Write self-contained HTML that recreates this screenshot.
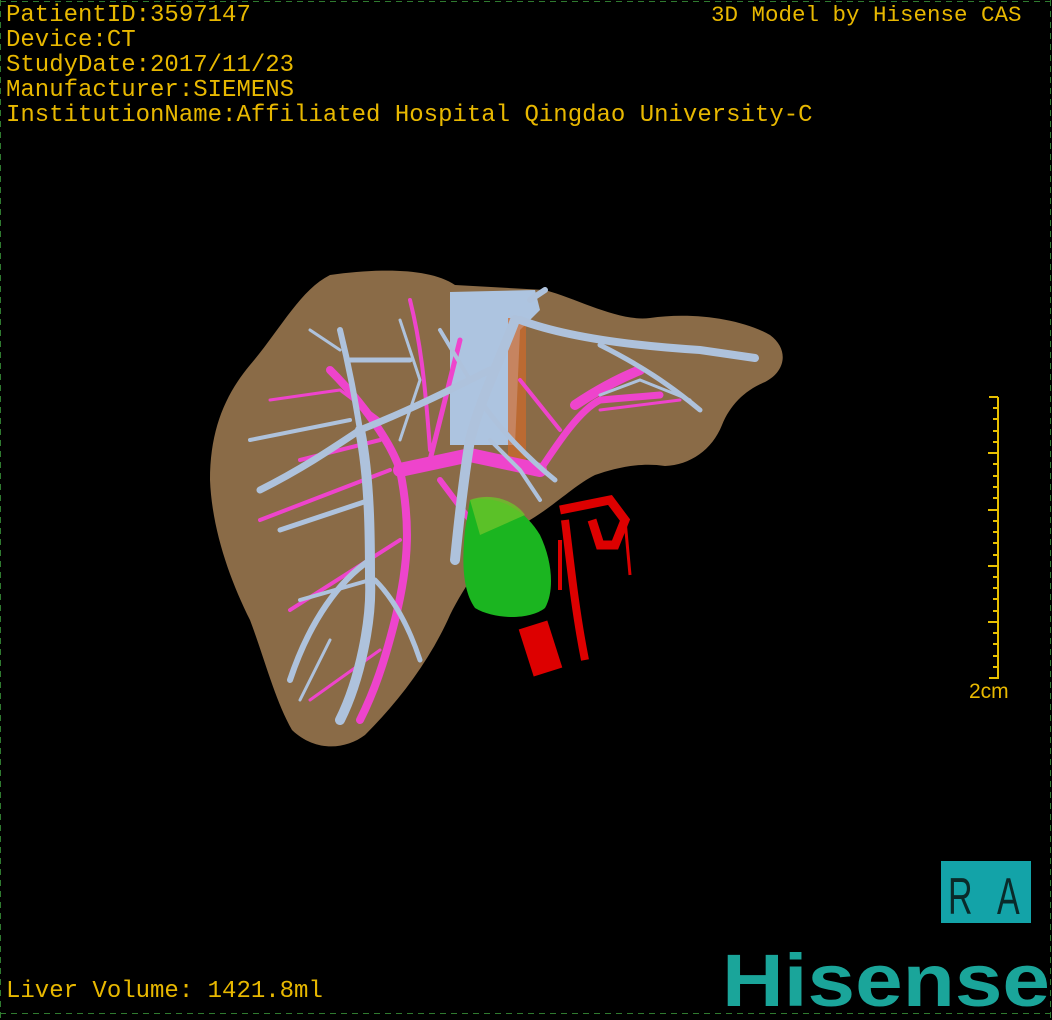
<!DOCTYPE html>
<html><head><meta charset="utf-8"><style>
html,body{margin:0;padding:0;background:#000;}
#c{position:relative;width:1052px;height:1020px;overflow:hidden;background:#000;}
.t{position:absolute;left:6px;font-family:"Liberation Mono",monospace;font-size:24px;color:#e8b800;line-height:25px;white-space:pre;}
</style></head><body><div id="c">
<svg width="1052" height="1020" style="position:absolute;left:0;top:0">
<g fill="none" stroke="#2f7a2f" stroke-width="1" stroke-dasharray="6,5">
<line x1="0" y1="1.5" x2="1052" y2="1.5"/>
<line x1="0.5" y1="0" x2="0.5" y2="1020"/>
<line x1="1050.5" y1="0" x2="1050.5" y2="1020"/>
<line x1="0" y1="1013.5" x2="1052" y2="1013.5"/>
</g>
<path d="M330,275 C380,268 430,268 455,285 L545,290 C580,300 620,322 650,318 C690,312 740,318 770,335 C790,350 785,372 765,382 C745,390 730,405 722,425 C712,450 690,465 665,466 C640,462 615,468 595,475 C575,485 555,505 530,520 C495,545 470,575 450,615 C430,660 400,700 365,735 C345,750 315,752 292,730 C275,700 265,660 250,620 C230,580 212,530 210,480 C210,430 225,395 250,365 C280,330 300,290 330,275 Z" fill="#8a6b47"/>
<path d="M450,292 L535,290 L540,310 L520,330 L515,445 L450,445 Z" fill="#adc4e0"/>
<rect x="508" y="318" width="18" height="150" fill="#d06a2a" opacity="0.7"/>
<g fill="none" stroke="#ee44cc" stroke-linecap="round">
<path d="M330,370 C360,400 390,440 400,470 C410,520 410,560 395,620 C385,660 375,690 360,720" stroke-width="8"/>
<path d="M400,470 L470,455 L540,470" stroke-width="14"/>
<path d="M540,470 C560,440 580,410 600,400 L660,395" stroke-width="7"/>
<path d="M575,405 C590,395 615,380 640,370" stroke-width="10"/>
<path d="M410,300 C420,340 425,380 430,450" stroke-width="4"/>
<path d="M460,340 C450,380 440,420 430,460" stroke-width="5"/>
<path d="M300,460 L380,440" stroke-width="4"/>
<path d="M260,520 L390,470" stroke-width="4"/>
<path d="M290,610 L400,540" stroke-width="4"/>
<path d="M270,400 L340,390 L380,420" stroke-width="3"/>
<path d="M520,380 L560,430" stroke-width="4"/>
<path d="M310,700 L380,650" stroke-width="3"/>
<path d="M600,410 L680,400" stroke-width="3"/>
<path d="M440,480 L470,520" stroke-width="6"/>
</g>
<g fill="none" stroke="#aec2dc" stroke-linecap="round">
<path d="M515,320 C500,360 480,400 470,440 C465,470 460,510 455,560" stroke-width="10"/>
<path d="M520,320 C560,335 620,345 700,350 L755,358" stroke-width="8"/>
<path d="M600,345 C640,365 670,385 700,410" stroke-width="5"/>
<path d="M490,370 C450,390 410,410 360,430 C330,450 300,470 260,490" stroke-width="7"/>
<path d="M360,430 C370,480 370,540 370,580 C372,620 360,680 340,720" stroke-width="10"/>
<path d="M370,560 C340,580 310,620 290,680" stroke-width="6"/>
<path d="M375,580 C395,600 410,630 420,660" stroke-width="5"/>
<path d="M440,330 L470,380" stroke-width="4"/>
<path d="M480,400 C500,430 530,460 555,480" stroke-width="5"/>
<path d="M340,330 C350,370 355,400 360,430" stroke-width="6"/>
<path d="M350,360 L410,360" stroke-width="5"/>
<path d="M250,440 L350,420" stroke-width="4"/>
<path d="M280,530 C310,520 340,510 370,500" stroke-width="5"/>
<path d="M300,600 L370,580" stroke-width="4"/>
<path d="M310,330 L340,350" stroke-width="3"/>
<path d="M400,320 L420,380 L400,440" stroke-width="3"/>
<path d="M600,395 L640,380 L690,400" stroke-width="3"/>
<path d="M530,300 L545,290" stroke-width="6"/>
<path d="M490,440 L520,470 L540,500" stroke-width="4"/>
<path d="M330,640 L300,700" stroke-width="3"/>
</g>
<g fill="none" stroke="#d00" stroke-linecap="butt">
<path d="M533,625 L548,672" stroke-width="30"/>
<path d="M565,520 C570,560 575,610 585,660" stroke-width="8"/>
<path d="M560,510 L610,500 L625,520 L615,545 L600,545 L592,520" stroke-width="9"/>
<path d="M625,520 L630,575" stroke-width="3"/>
<path d="M560,540 L560,590" stroke-width="4"/>
</g>
<path d="M470,500 C500,495 525,510 540,535 C552,560 555,590 545,608 C530,620 495,620 475,608 C462,590 462,560 465,530 Z" fill="#1bb520"/>
<path d="M470,500 C490,492 515,500 525,515 L480,535 Z" fill="#6cc42a" opacity="0.8"/>
<g stroke="#e8c000" stroke-width="2">
<line x1="998" y1="397" x2="998" y2="679"/>
<line x1="989" y1="397" x2="998" y2="397"/>
<line x1="989" y1="678" x2="998" y2="678"/>
<path d="M993,408H998M993,419H998M993,431H998M993,442H998M988,453H998M993,464H998M993,476H998M993,487H998M993,498H998M988,510H998M993,521H998M993,532H998M993,543H998M993,555H998M988,566H998M993,577H998M993,588H998M993,599H998M993,611H998M988,622H998M993,633H998M993,644H998M993,656H998M993,667H998"/>
</g>
<rect x="941" y="861" width="90" height="62" fill="#13a3a8"/>
<g font-family="Liberation Sans,sans-serif" font-size="40" fill="#0a2a2a" transform="translate(0,0)">
<text x="0" y="0" transform="translate(948,914) scale(0.85,1.3)">R</text>
<text x="0" y="0" transform="translate(997,914) scale(0.85,1.3)">A</text>
</g>
<text x="722" y="1006" font-family="Liberation Sans,sans-serif" font-weight="bold" font-size="74" fill="#1aa59a" textLength="328" lengthAdjust="spacingAndGlyphs">Hisense</text>
<text x="969" y="698" font-family="Liberation Sans,sans-serif" font-size="21" fill="#e8b800">2cm</text>
</svg>
<div class="t" style="top:3px">PatientID:3597147
Device:CT
StudyDate:2017/11/23
Manufacturer:SIEMENS
InstitutionName:Affiliated Hospital Qingdao University-C</div>
<div class="t" style="left:711px;top:3px;font-size:22.5px">3D Model by Hisense CAS</div>
<div class="t" style="top:979px">Liver Volume: 1421.8ml</div>
</div></body></html>
